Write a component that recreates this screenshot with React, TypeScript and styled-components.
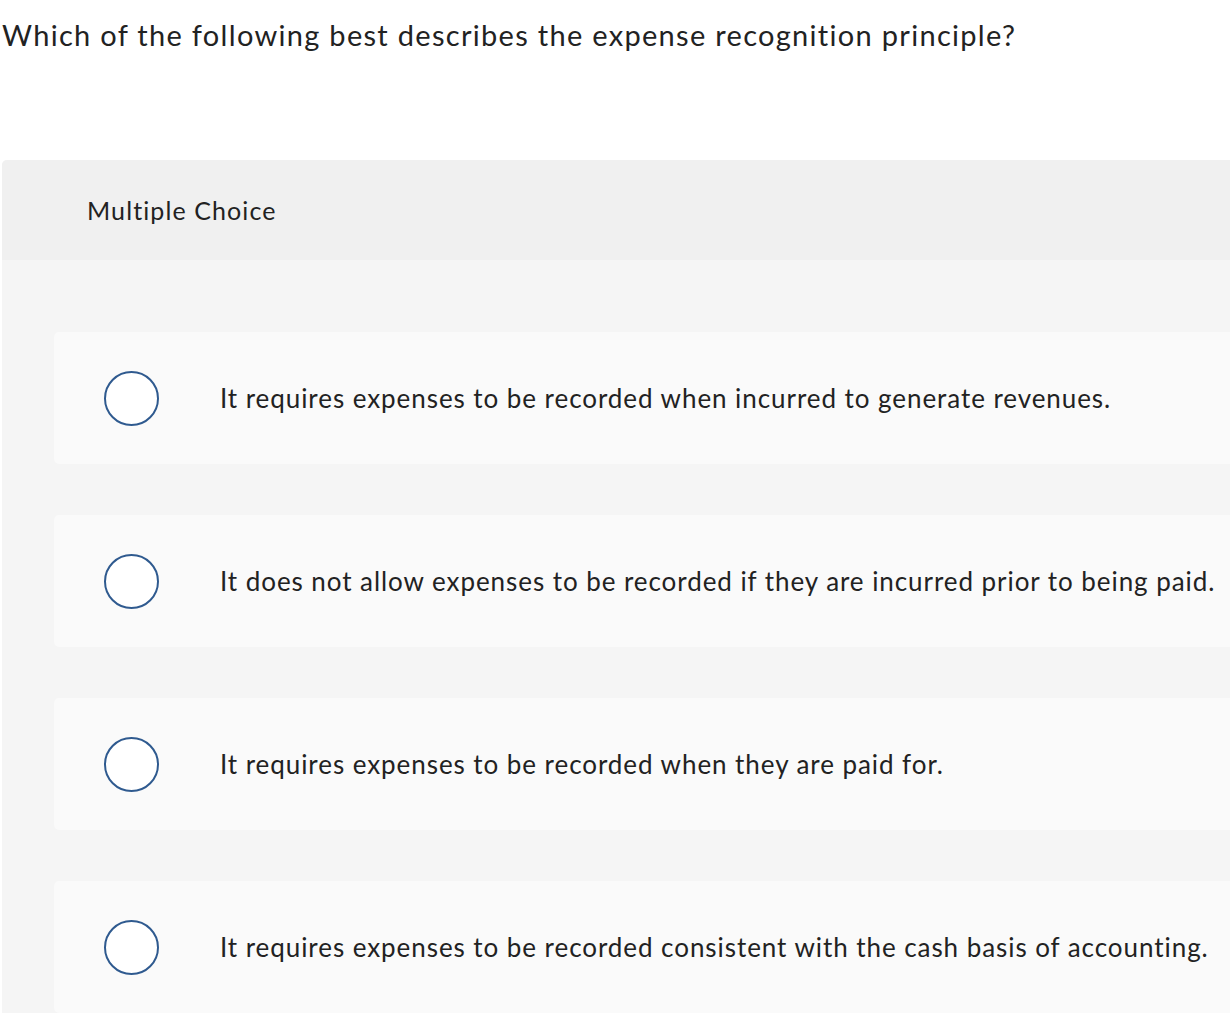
import { createGlobalStyle, styled } from "styled-components";

const GlobalStyle = createGlobalStyle`
  html, body {
    margin: 0;
    padding: 0;
    background: #ffffff;
    overflow: hidden;
  }
  body {
    font-family: Lato, "Open Sans", Arial, sans-serif;
    color: #222222;
  }
`;

const options: string[] = [
  "It requires expenses to be recorded when incurred to generate revenues.",
  "It does not allow expenses to be recorded if they are incurred prior to being paid.",
  "It requires expenses to be recorded when they are paid for.",
  "It requires expenses to be recorded consistent with the cash basis of accounting.",
];

const App = () => {
  return (
    <>
      <GlobalStyle />
      <Page>
        <Question>
          Which of the following best describes the expense recognition principle?
        </Question>
        <Panel>
          <PanelHeader>Multiple Choice</PanelHeader>
          <OptionList>
            {options.map((text) => (
              <OptionCard key={text}>
                <Radio />
                <OptionText>{text}</OptionText>
              </OptionCard>
            ))}
          </OptionList>
        </Panel>
      </Page>
    </>
  );
};

const Page = styled.main`
  padding-left: 2px;
  width: 1260px;
`;

const Question = styled.h1`
  margin: 0;
  padding-top: 17px;
  height: 160px;
  box-sizing: border-box;
  font-size: 29px;
  font-weight: 400;
  line-height: 36px;
  letter-spacing: 1.3px;
  color: #222222;
`;

const Panel = styled.section`
  border-radius: 5px 0 0 0;
  overflow: hidden;
  background-color: #f5f5f5;
`;

const PanelHeader = styled.div`
  height: 100px;
  display: flex;
  align-items: center;
  padding-left: 85px;
  background-color: #f0f0f0;
  font-size: 25px;
  letter-spacing: 1.1px;
  color: #222222;
`;

const OptionList = styled.div`
  display: flex;
  flex-direction: column;
  gap: 51px;
  padding: 72px 0 0 52px;
`;

const OptionCard = styled.div`
  height: 132px;
  display: flex;
  align-items: center;
  background-color: #fafafa;
  border-radius: 5px 0 0 5px;
`;

const Radio = styled.span`
  flex: none;
  width: 51px;
  height: 51px;
  margin-left: 50px;
  border: 2.5px solid #2f5a8f;
  border-radius: 50%;
  background-color: #ffffff;
`;

const OptionText = styled.span`
  margin-left: 61px;
  font-size: 26px;
  letter-spacing: 0.94px;
  color: #222222;
`;

export default App;
